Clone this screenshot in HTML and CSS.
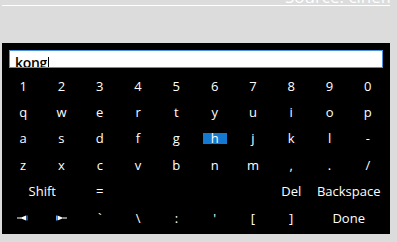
FILE: index.html
```html
<!DOCTYPE html>
<html lang="en">
<head>
    <meta charset="UTF-8">
    <meta name="viewport" content="width=device-width, initial-scale=1.0">
    <title>On-screen keyboard</title>
    <link rel="stylesheet" href="styles.css">
</head>
<body>
    <div class="top">
        <div class="source"><span>Source: cinema</span></div>
        <div class="rule"></div>
    </div>

    <div class="panel">
        <div class="entry"><span class="typed">kong</span><span class="caret"></span></div>

        <div class="keys">
            <div class="key"><span>1</span></div>
            <div class="key"><span>2</span></div>
            <div class="key"><span>3</span></div>
            <div class="key"><span>4</span></div>
            <div class="key"><span>5</span></div>
            <div class="key"><span>6</span></div>
            <div class="key"><span>7</span></div>
            <div class="key"><span>8</span></div>
            <div class="key"><span>9</span></div>
            <div class="key"><span>0</span></div>

            <div class="key"><span>q</span></div>
            <div class="key"><span>w</span></div>
            <div class="key"><span>e</span></div>
            <div class="key"><span>r</span></div>
            <div class="key"><span>t</span></div>
            <div class="key"><span>y</span></div>
            <div class="key"><span>u</span></div>
            <div class="key"><span>i</span></div>
            <div class="key"><span>o</span></div>
            <div class="key"><span>p</span></div>

            <div class="key"><span>a</span></div>
            <div class="key"><span>s</span></div>
            <div class="key"><span>d</span></div>
            <div class="key"><span>f</span></div>
            <div class="key"><span>g</span></div>
            <div class="key focused"><span>h</span></div>
            <div class="key"><span>j</span></div>
            <div class="key"><span>k</span></div>
            <div class="key"><span>l</span></div>
            <div class="key"><span>-</span></div>

            <div class="key"><span>z</span></div>
            <div class="key"><span>x</span></div>
            <div class="key"><span>c</span></div>
            <div class="key"><span>v</span></div>
            <div class="key"><span>b</span></div>
            <div class="key"><span>n</span></div>
            <div class="key"><span>m</span></div>
            <div class="key"><span>,</span></div>
            <div class="key"><span>.</span></div>
            <div class="key"><span>/</span></div>

            <div class="key wide"><span>Shift</span></div>
            <div class="key"><span>=</span></div>
            <div class="key blank"></div>
            <div class="key blank"></div>
            <div class="key blank"></div>
            <div class="key blank"></div>
            <div class="key"><span>Del</span></div>
            <div class="key wide"><span>Backspace</span></div>

            <div class="key">
                <svg class="arrow" width="12" height="6" viewBox="0 0 12 6">
                    <rect x="0" y="2.5" width="4" height="1" fill="#fff"/>
                    <polygon points="3,3 9,0.5 9,5.5" fill="#fff"/>
                    <rect x="9.5" y="0.5" width="1" height="5" fill="#5aa7ff"/>
                </svg>
            </div>
            <div class="key">
                <svg class="arrow" width="12" height="6" viewBox="0 0 12 6">
                    <rect x="1" y="0.5" width="1" height="5" fill="#5aa7ff"/>
                    <polygon points="2.5,0.5 8.5,3 2.5,5.5" fill="#fff"/>
                    <rect x="8" y="2.5" width="4" height="1" fill="#fff"/>
                </svg>
            </div>
            <div class="key"><span>`</span></div>
            <div class="key"><span>\</span></div>
            <div class="key"><span>:</span></div>
            <div class="key"><span>'</span></div>
            <div class="key"><span>[</span></div>
            <div class="key"><span>]</span></div>
            <div class="key wide"><span>Done</span></div>
        </div>
    </div>
</body>
</html>
```

FILE: styles.css
```css
html, body {
    margin: 0;
    padding: 0;
}
body {
    width: 397px;
    height: 242px;
    overflow: hidden;
    background: #dcdcdc;
    font-family: "Open Sans", "Noto Sans", sans-serif;
}
.top {
    height: 43px;
    padding-left: 2px;
}
.source {
    width: 388px;
    height: 4px;
    overflow: hidden;
    display: flex;
    align-items: flex-end;
    justify-content: flex-end;
}
.source span {
    flex: none;
    margin-right: -16px;
    color: #fff;
    font-size: 17px;
    line-height: 15px;
    white-space: nowrap;
}
.rule {
    margin-top: 1px;
    width: 388px;
    height: 1px;
    background: #fff;
}
.panel {
    margin-left: 2px;
    width: 388px;
    height: 191px;
    background: #000;
    padding-top: 7px;
    box-sizing: border-box;
}
.entry {
    margin-left: 7px;
    width: 374px;
    height: 18px;
    box-sizing: border-box;
    border: 1px solid #4b93dc;
    background: #fff;
    display: flex;
    align-items: flex-end;
    padding-left: 5px;
    overflow: hidden;
}
.typed {
    font-size: 14px;
    font-weight: 600;
    line-height: 11.1px;
    height: 10px;
    overflow: hidden;
    color: #000;
    letter-spacing: -0.3px;
}
.caret {
    width: 1px;
    height: 10px;
    margin-left: 1px;
    background: #000;
}
.keys {
    margin: 5px 0 0 2px;
    width: 383px;
    display: grid;
    grid-template-columns: repeat(10, 1fr);
    grid-auto-rows: 26.4px;
}
.key {
    display: flex;
    align-items: center;
    justify-content: center;
    color: #fff;
    font-size: 13px;
}
.key span {
    display: block;
    height: 11px;
    line-height: 11.9px;
    padding: 0 8px;
    white-space: nowrap;
}
.key.wide {
    grid-column: span 2;
}
.key.focused span {
    background: #1479d1;
}
.arrow {
    display: block;
}
```
